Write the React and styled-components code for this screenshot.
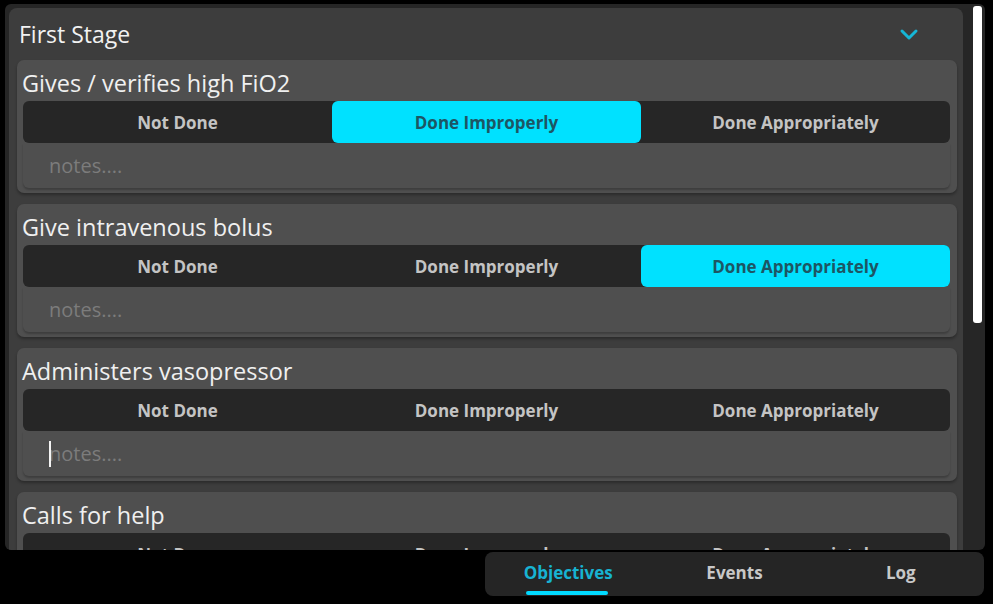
import React from 'react';
import styled, { createGlobalStyle } from 'styled-components';

const Global = createGlobalStyle`
  html, body {
    margin: 0;
    padding: 0;
    background: #000;
    font-family: "Open Sans", "Liberation Sans", sans-serif;
  }
`;

const Page = styled.div`
  width: 993px;
  height: 604px;
  display: flex;
  flex-direction: column;
  align-items: flex-end;
  padding: 4px 9px 0 4px;
  box-sizing: border-box;
  gap: 2px;
`;

const Scroller = styled.div`
  width: 980px;
  height: 546px;
  margin-right: -1px;
  display: flex;
  background: #262626;
  border-radius: 6px;
  overflow: hidden;
`;

const Viewport = styled.div`
  flex: 1;
  min-width: 0;
  overflow: hidden;
`;

const ScrollTrack = styled.div`
  width: 15px;
  flex: none;
  padding: 2px 3px 0 3px;
  box-sizing: border-box;
`;

const Thumb = styled.div`
  height: 317px;
  background: #fff;
  border-radius: 3px;
`;

const Stage = styled.section`
  margin: 4px 7px 4px 4px;
  background: #3d3d3d;
  border-radius: 8px;
  padding-bottom: 10px;
`;

const StageHeader = styled.header`
  height: 52px;
  display: flex;
  align-items: center;
  justify-content: space-between;
  padding: 0 42px 0 10px;
  color: #f2f2f2;
  font-size: 23px;
`;

const Chevron = styled.svg`
  width: 24px;
  height: 24px;
  color: #16b6d6;
`;

const ItemList = styled.div`
  display: flex;
  flex-direction: column;
  gap: 11px;
  padding: 0 6px 0 8px;
`;

const Item = styled.div`
  background: #4f4f4f;
  border-radius: 7px;
  padding: 1px 7px 5px 6px;
  box-shadow: 0 2px 3px rgba(0, 0, 0, 0.3);
`;

const ItemTitle = styled.div`
  color: #f0f0f0;
  font-size: 23.5px;
  line-height: 40px;
  padding-top: 2px;
  margin: 0 0 -2px -1px;
`;

const Segmented = styled.div`
  display: grid;
  grid-template-columns: repeat(3, 1fr);
  height: 42px;
  background: #262626;
  border-radius: 6px;
`;

const Segment = styled.div`
  display: flex;
  align-items: center;
  justify-content: center;
  border-radius: 6px;
  font-size: 17px;
  font-weight: 700;
  background: ${({ $active }) => ($active ? '#00e1ff' : 'transparent')};
  color: ${({ $active }) => ($active ? '#1d5664' : '#c4c4c4')};
`;

const NotesBox = styled.div`
  position: relative;
  height: 45px;
  display: flex;
  align-items: center;
  padding-left: 26px;
  border-radius: 0 0 6px 6px;
  box-shadow: 0 2px 2px rgba(0, 0, 0, 0.22);
  color: #7c7c7c;
  font-size: 20px;
`;

const Caret = styled.span`
  position: absolute;
  left: 26px;
  top: 10px;
  width: 2px;
  height: 26px;
  background: #f4f4f4;
`;

const TabBar = styled.nav`
  width: 499px;
  height: 44px;
  display: grid;
  grid-template-columns: repeat(3, 1fr);
  background: #252525;
  border-radius: 8px;
`;

const Tab = styled.div`
  position: relative;
  display: flex;
  align-items: center;
  justify-content: center;
  padding-bottom: 4px;
  font-size: 17px;
  font-weight: 700;
  color: ${({ $active }) => ($active ? '#17b3d2' : '#c8c8c8')};
`;

const Underline = styled.span`
  position: absolute;
  bottom: 1px;
  left: 50%;
  width: 82px;
  margin-left: -42px;
  height: 4px;
  border-radius: 2px;
  background: #00d9ff;
`;

const OPTIONS = ['Not Done', 'Done Improperly', 'Done Appropriately'];

const objectives = [
  { title: 'Gives / verifies high FiO2', value: 1 },
  { title: 'Give intravenous bolus', value: 2 },
  { title: 'Administers vasopressor', value: -1, focused: true },
  { title: 'Calls for help', value: -1 },
];

const Objective = ({ item }) => (
  <Item>
    <ItemTitle>{item.title}</ItemTitle>
    <Segmented>
      {OPTIONS.map((o, i) => (
        <Segment key={o} $active={i === item.value}>{o}</Segment>
      ))}
    </Segmented>
    <NotesBox>
      {item.focused && <Caret />}
      notes....
    </NotesBox>
  </Item>
);

const App = () => (
  <>
    <Global />
    <Page>
      <Scroller>
        <Viewport>
          <Stage>
            <StageHeader>
              First Stage
              <Chevron viewBox="0 0 24 24" fill="none" stroke="currentColor" strokeWidth="3" strokeLinecap="round" strokeLinejoin="round">
                <path d="M5 9l7 7 7-7" />
              </Chevron>
            </StageHeader>
            <ItemList>
              {objectives.map((o) => (
                <Objective key={o.title} item={o} />
              ))}
            </ItemList>
          </Stage>
        </Viewport>
        <ScrollTrack>
          <Thumb />
        </ScrollTrack>
      </Scroller>
      <TabBar>
        <Tab $active>
          Objectives
          <Underline />
        </Tab>
        <Tab>Events</Tab>
        <Tab>Log</Tab>
      </TabBar>
    </Page>
  </>
);

export default App;
